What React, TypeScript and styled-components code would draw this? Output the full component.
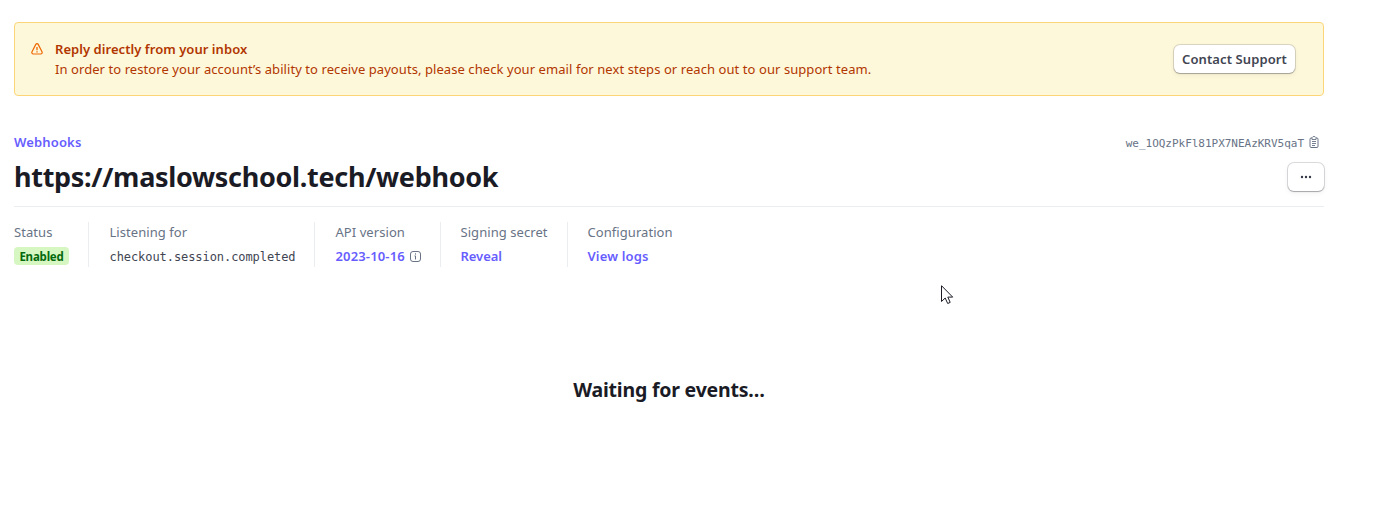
import React from "react";
import styled, { createGlobalStyle } from "styled-components";

const GlobalStyle = createGlobalStyle`
  * { box-sizing: border-box; }
  body {
    margin: 0;
    background: #fff;
    color: #1a1b25;
    font: 400 13px/20px "Noto Sans", "Open Sans", sans-serif;
  }
  h1, h2, p { margin: 0; }
`;

const Page = styled.main`
  width: 1324px;
  height: 505px;
  padding: 22px 0 0 14px;
`;

const Banner = styled.section`
  display: flex;
  align-items: center;
  height: 74px;
  padding: 0 28px 0 16px;
  background: #fef8da;
  border: 1px solid #fcd579;
  border-radius: 4px;
  color: #b13600;
`;

const BannerIcon = styled.svg`
  width: 12px;
  height: 12px;
  margin: 0 12px 20px 0;
`;

const BannerText = styled.div`
  flex: 1;
  white-space: nowrap;
`;

const BannerTitle = styled.p`
  font-weight: 600;
  letter-spacing: 0.05px;
`;

const BannerBody = styled.p`
  letter-spacing: 0.07px;
`;

const Button = styled.button<{ $width: number }>`
  display: flex;
  align-items: center;
  justify-content: center;
  width: ${(p) => p.$width}px;
  height: 28px;
  padding: 0;
  border: 0;
  border-radius: 6px;
  background: #fff;
  color: #414552;
  font: 600 13px/20px "Noto Sans", "Open Sans", sans-serif;
  letter-spacing: 0.1px;
  white-space: nowrap;
  box-shadow: 0 0 0 1px rgba(64, 68, 82, 0.18), 0 1px 1px rgba(0, 0, 0, 0.22),
    0 2px 5px rgba(64, 68, 82, 0.08);
`;

const HeaderRow = styled.div<{ $height: number }>`
  display: flex;
  align-items: center;
  justify-content: space-between;
  height: ${(p) => p.$height}px;
`;

const Header = styled.header`
  margin-top: 36px;
  height: 75px;
  border-bottom: 1px solid #ebeef1;
`;

const Link = styled.a<{ $spacing?: number }>`
  color: #675dff;
  font-weight: 600;
  letter-spacing: ${(p) => p.$spacing ?? 0.15}px;
`;

const WebhookId = styled.div`
  display: flex;
  align-items: center;
  gap: 5px;
  padding-right: 4px;
  color: #687385;
  font: 11px/20px "DejaVu Sans Mono", monospace;
  letter-spacing: -0.02px;
`;

const IdText = styled.span`
  padding-top: 3px;
`;

const Title = styled.h1`
  font-size: 27px;
  line-height: 36px;
  font-weight: 700;
  letter-spacing: -0.31px;
`;

const Details = styled.div`
  display: flex;
  margin-top: 15px;
  height: 45px;
`;

const Detail = styled.div<{ $width: number; $indent?: number; $last?: boolean }>`
  width: ${(p) => p.$width}px;
  padding-left: ${(p) => p.$indent ?? 20.5}px;
  border-right: ${(p) => (p.$last ? 0 : 1)}px solid #ebeef1;
  white-space: nowrap;
`;

const Label = styled.div`
  height: 20px;
  color: #687385;
  letter-spacing: 0.06px;
`;

const Value = styled.div`
  display: flex;
  align-items: center;
  gap: 5px;
  height: 20px;
  margin-top: 4px;
`;

const Badge = styled.span`
  width: 55px;
  height: 18px;
  border-radius: 4px;
  background: #d7f7c2;
  color: #05690d;
  font-size: 11.5px;
  line-height: 19px;
  font-weight: 700;
  text-align: center;
  letter-spacing: -0.2px;
`;

const EventName = styled.code`
  padding-top: 2px;
  color: #414552;
  font: 12px/20px "DejaVu Sans Mono", monospace;
  letter-spacing: -0.07px;
`;

const Waiting = styled.h2`
  margin-top: 109px;
  font-size: 19.5px;
  line-height: 28px;
  font-weight: 700;
  text-align: center;
  letter-spacing: -0.2px;
`;

const Cursor = styled.svg`
  position: absolute;
  left: 941px;
  top: 285px;
  width: 13px;
  height: 20px;
`;

export default function App() {
  return (
    <Page>
      <GlobalStyle />
      <Banner>
        <BannerIcon viewBox="0 0 12 12" fill="none" stroke="#ed6804">
          <path
            d="M4.8 1.4 1 8.7C.5 9.8 1.1 11 2.3 11h7.4c1.2 0 1.8-1.2 1.3-2.3L7.2 1.4C6.7.4 5.3.4 4.8 1.4Z"
            strokeWidth="1.2"
          />
          <path d="M6 4v3.2M6 8.3v1.2" strokeWidth="1.3" />
        </BannerIcon>
        <BannerText>
          <BannerTitle>Reply directly from your inbox</BannerTitle>
          <BannerBody>
            In order to restore your account’s ability to receive payouts, please check your email
            for next steps or reach out to our support team.
          </BannerBody>
        </BannerText>
        <Button $width={121}>Contact Support</Button>
      </Banner>

      <Header>
        <HeaderRow $height={20}>
          <Link>Webhooks</Link>
          <WebhookId>
            <IdText>we_1OQzPkFl81PX7NEAzKRV5qaT</IdText>
            <svg width="11" height="12" viewBox="0 0 11 12" fill="none" stroke="#687385">
              <path d="M3 2H2C1.3 2 1 2.5 1 3.2v7c0 .8.3 1.3 1 1.3h6c.7 0 1-.5 1-1.3v-7C9 2.500 8.700 2 8 2H7" />
              <path d="M3 3.5V1.700L4 .6h2l1 1.100v1.800ZM3 5.500h4M3 7.500h4M3 9.500h3" strokeWidth=".9" />
            </svg>
          </WebhookId>
        </HeaderRow>
        <HeaderRow $height={50}>
          <Title>https://maslowschool.tech/webhook</Title>
          <Button $width={36} aria-label="More options">
            <svg width="12" height="4" viewBox="0 0 12 4" fill="#353846">
              <circle cx="2" cy="2" r="1.2" />
              <circle cx="6" cy="2" r="1.2" />
              <circle cx="10" cy="2" r="1.2" />
            </svg>
          </Button>
        </HeaderRow>
      </Header>

      <Details>
        <Detail $width={75} $indent={0}>
          <Label>Status</Label>
          <Value>
            <Badge>Enabled</Badge>
          </Value>
        </Detail>
        <Detail $width={226}>
          <Label>Listening for</Label>
          <Value>
            <EventName>checkout.session.completed</EventName>
          </Value>
        </Detail>
        <Detail $width={126}>
          <Label>API version</Label>
          <Value>
            <Link>2023-10-16</Link>
            <svg width="11" height="11" viewBox="0 0 11 11" fill="none" stroke="#687385">
              <rect x=".5" y=".5" width="10" height="10" rx="2.5" />
              <path d="M5.5 2.300v1.300M4.500 4.900h1v3.600" />
            </svg>
          </Value>
        </Detail>
        <Detail $width={127} $indent={19.5}>
          <Label>Signing secret</Label>
          <Value>
            <Link $spacing={-0.05}>Reveal</Link>
          </Value>
        </Detail>
        <Detail $width={130} $indent={19.5} $last>
          <Label>Configuration</Label>
          <Value>
            <Link>View logs</Link>
          </Value>
        </Detail>
      </Details>

      <Waiting>Waiting for events…</Waiting>

      <Cursor viewBox="0 0 13 20">
        <path
          d="M.5.7v15.800l3.700-3.500 2.500 5.500 2.500-1.100-2.400-5.300h4.900Z"
          fill="#fff"
          stroke="#1a1b25"
        />
      </Cursor>
    </Page>
  );
}
